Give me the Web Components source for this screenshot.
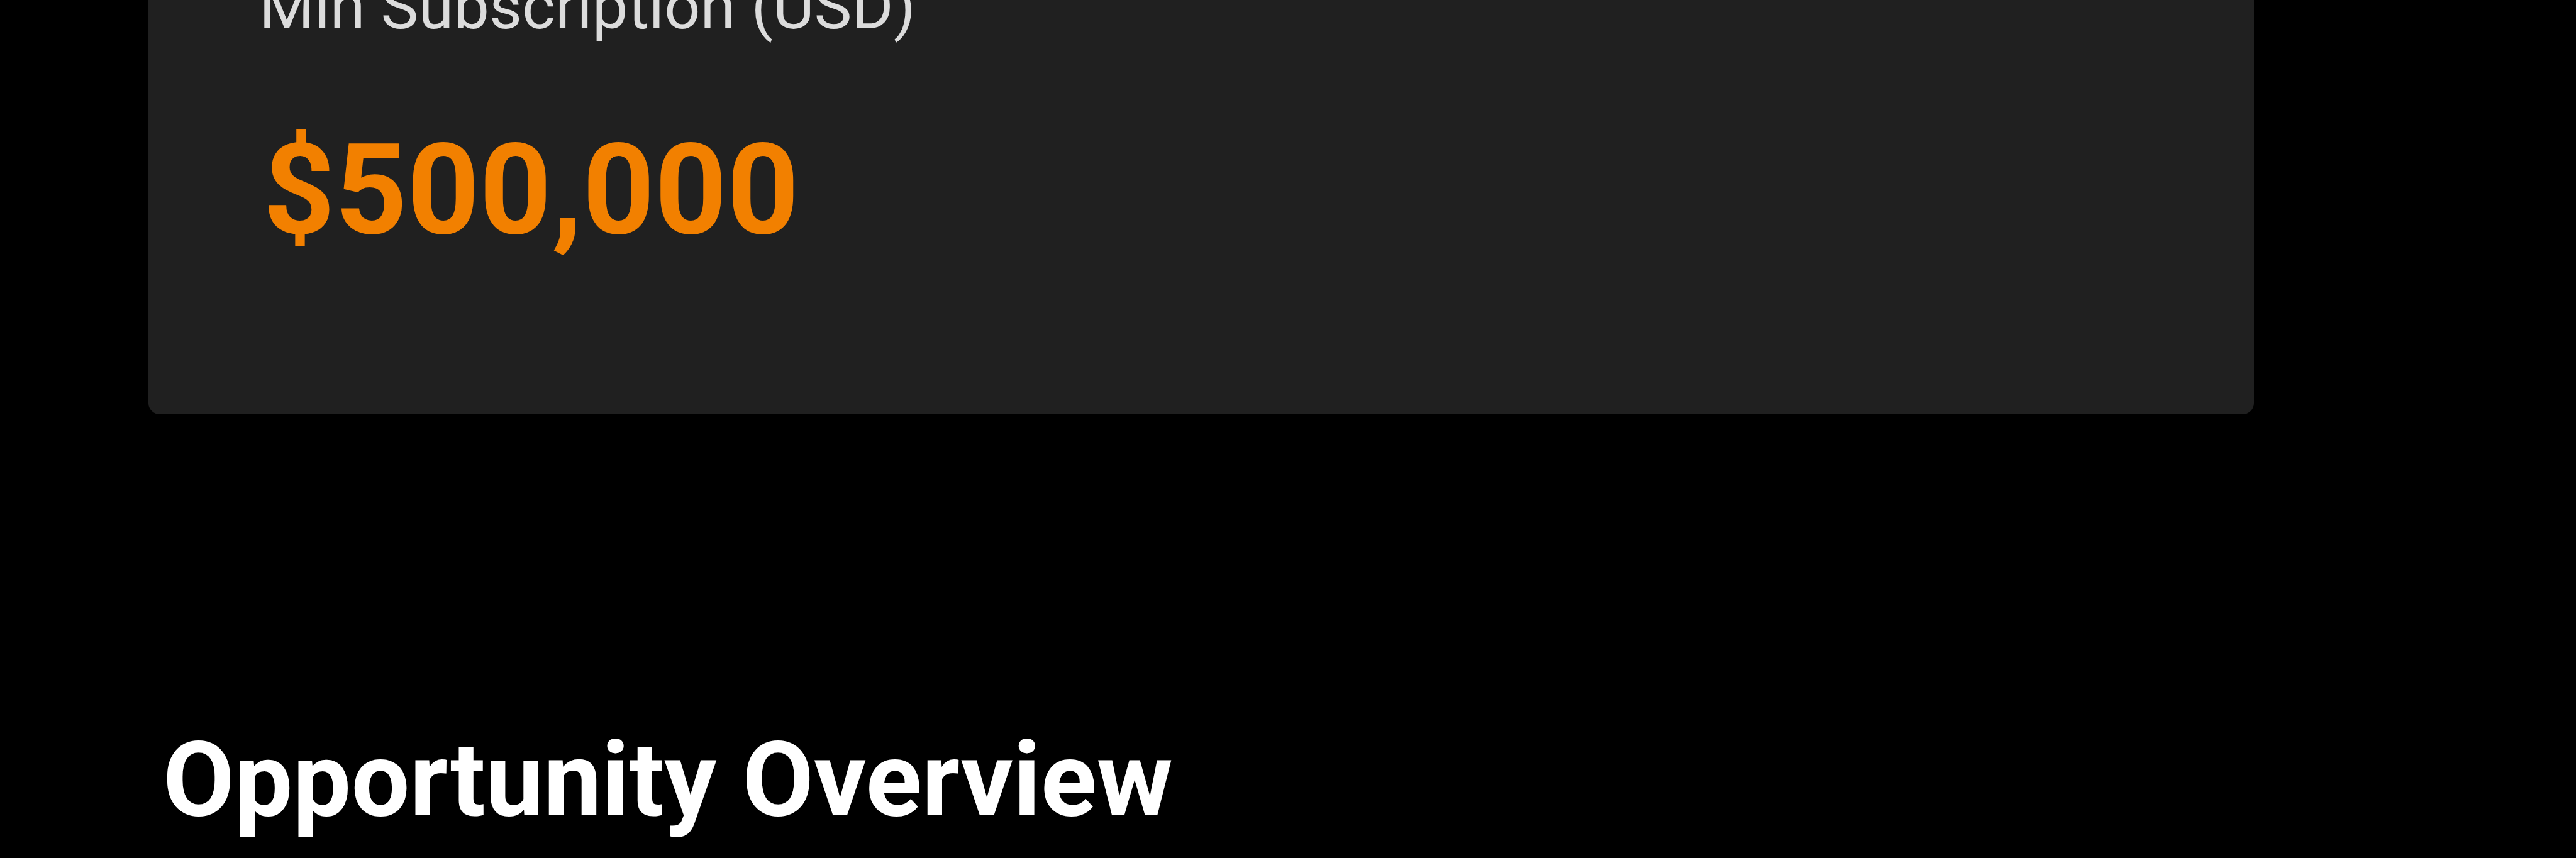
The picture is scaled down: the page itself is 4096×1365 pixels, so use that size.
<!DOCTYPE html>
<html lang="en">
<head>
<meta charset="utf-8">
<title>Opportunity</title>
<style>
html, body { margin: 0; background: #000; }
body { font-family: Roboto, "Liberation Sans", sans-serif; overflow: hidden; }
</style>
</head>
<body>
<opportunity-page></opportunity-page>
<script>
class StatItem extends HTMLElement {
  connectedCallback() {
    this.attachShadow({ mode: "open" }).innerHTML = `
      <style>
        :host { display: block; }
        dl { display: flex; flex-direction: column; gap: 120px; margin: 0; }
        dt { font-size: 101px; line-height: 112px; color: #dcdcdc; white-space: nowrap; }
        dd { margin: 0; padding-left: 6px; font-size: 200px; line-height: 232px; font-weight: 700; color: #f28000; }
      </style>
      <dl><dt><slot name="label"></slot></dt><dd><slot></slot></dd></dl>`;
  }
}
class InfoCard extends HTMLElement {
  connectedCallback() {
    this.attachShadow({ mode: "open" }).innerHTML = `
      <style>
        :host { display: block; background: #202020; border-radius: 18px; padding: 0 176px 240px; }
      </style>
      <slot></slot>`;
  }
}
class SectionHeading extends HTMLElement {
  connectedCallback() {
    this.attachShadow({ mode: "open" }).innerHTML = `
      <style>
        :host { display: block; padding-left: 23px; }
        h2 { margin: 0; font-size: 165px; line-height: 188px; font-weight: 700; color: #fff; white-space: nowrap; }
      </style>
      <h2><slot></slot></h2>`;
  }
}
class OpportunityPage extends HTMLElement {
  connectedCallback() {
    this.attachShadow({ mode: "open" }).innerHTML = `
      <style>
        :host { display: block; }
        /* The view starts part-way down the card, so its first line runs off the top. */
        main { display: flex; flex-direction: column; gap: 488px; margin: -45px 512px 0 236px; }
      </style>
      <main>
        <info-card>
          <stat-item><span slot="label">Min Subscription (USD)</span>$500,000</stat-item>
        </info-card>
        <section-heading>Opportunity Overview</section-heading>
      </main>`;
  }
}
customElements.define("stat-item", StatItem);
customElements.define("info-card", InfoCard);
customElements.define("section-heading", SectionHeading);
customElements.define("opportunity-page", OpportunityPage);
</script>
</body>
</html>
